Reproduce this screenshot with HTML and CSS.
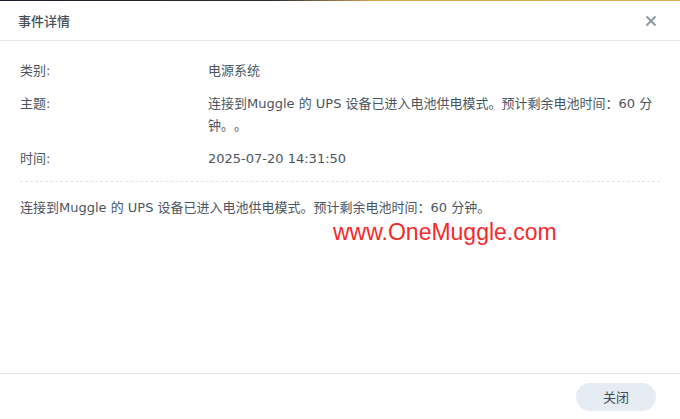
FILE: index.html
```html
<!DOCTYPE html>
<html lang="zh-CN">
<head>
    <meta charset="UTF-8">
    <meta name="viewport" content="width=device-width, initial-scale=1.0">
    <title>事件详情</title>
    <link rel="stylesheet" href="styles.css">
</head>
<body>
    <div class="dialog">
        <div class="topline"></div>
        <div class="header">
            <div class="title">事件详情</div>
            <button class="close" aria-label="关闭">
                <svg width="12" height="12" viewBox="0 0 12 12">
                    <path d="M1.5 1.5 L10.5 10.5 M10.5 1.5 L1.5 10.5" stroke="#8e98a3" stroke-width="2" fill="none"/>
                </svg>
            </button>
        </div>
        <div class="content">
            <div class="row">
                <div class="label">类别:</div>
                <div class="value">电源系统</div>
            </div>
            <div class="row">
                <div class="label">主题:</div>
                <div class="value">连接到Muggle 的 UPS 设备已进入电池供电模式。预计剩余电池时间：60 分钟。。</div>
            </div>
            <div class="row">
                <div class="label">时间:</div>
                <div class="value">2025-07-20 14:31:50</div>
            </div>
            <div class="separator"></div>
            <div class="message">连接到Muggle 的 UPS 设备已进入电池供电模式。预计剩余电池时间：60 分钟。</div>
            <div class="watermark">www.OneMuggle.com</div>
        </div>
        <div class="footer">
            <button class="btn">关闭</button>
        </div>
    </div>
</body>
</html>
```

FILE: styles.css
```css
html, body {
    margin: 0;
    height: 100%;
    background-color: #ffffff;
}
body {
    font-family: "DejaVu Sans", "Noto Sans CJK SC", sans-serif;
    font-size: 13px;
    color: #4b5560;
    text-spacing-trim: space-all;
}
.dialog {
    display: flex;
    flex-direction: column;
    height: 100vh;
}
.topline {
    height: 1px;
    background: linear-gradient(to right, #1b1f2c 0%, #2a2a30 40%, #d6a552 55%, #dcae5c 100%);
}
.header {
    display: flex;
    align-items: center;
    justify-content: space-between;
    height: 39px;
    padding: 0 22px 0 18px;
    border-bottom: 1px solid #e3e8ed;
}
.title {
    font-size: 13px;
    font-weight: 500;
    color: #46505c;
}
.close {
    display: flex;
    align-items: center;
    justify-content: center;
    width: 14px;
    height: 14px;
    padding: 0;
    border: none;
    background: none;
    cursor: pointer;
}
.content {
    flex: 1;
    padding: 19px 20px 0 20px;
}
.row {
    display: grid;
    grid-template-columns: 188px 1fr;
    line-height: 22px;
    margin-bottom: 11px;
}
.separator {
    margin-top: 5px;
    border-top: 1px dashed #dfe4ea;
}
.message {
    margin-top: 15px;
    line-height: 22px;
}
.watermark {
    margin-top: 1px;
    margin-left: 313px;
    font-family: "Liberation Sans", Arial, sans-serif;
    font-size: 23px;
    line-height: 24px;
    color: #f52a2a;
}
.footer {
    display: flex;
    justify-content: flex-end;
    align-items: center;
    height: 45px;
    padding-right: 24px;
    border-top: 1px solid #e6e6e6;
}
.btn {
    width: 80px;
    height: 28px;
    border: none;
    border-radius: 14px;
    background-color: #e6ecf3;
    color: #414b56;
    font-family: "DejaVu Sans", "Noto Sans CJK SC", sans-serif;
    font-size: 13px;
    cursor: pointer;
}
```
